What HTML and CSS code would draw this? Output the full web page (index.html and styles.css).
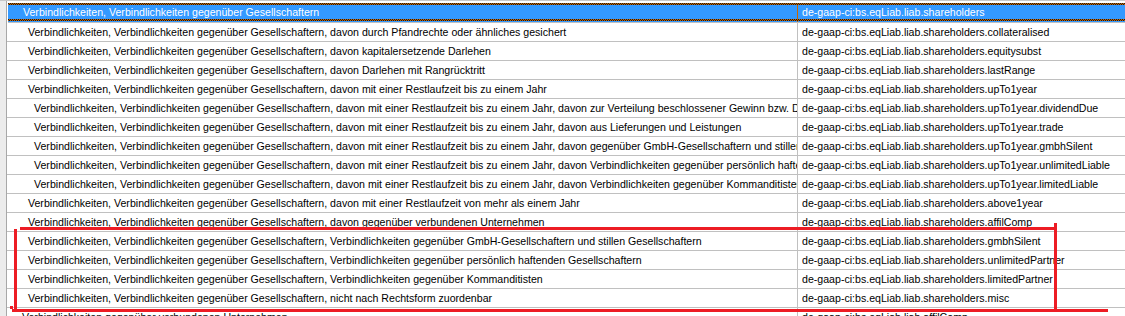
FILE: index.html
```html
<!DOCTYPE html>
<html lang="de">
<head>
<meta charset="utf-8">
<title>Taxonomie</title>
<link rel="stylesheet" href="styles.css">
</head>
<body>
<div class="frame">
  <div class="gutter"></div>
  <div class="grid">
    <div class="row selected"><div class="c1 l0">Verbindlichkeiten, Verbindlichkeiten gegenüber Gesellschaftern</div><div class="c2">de-gaap-ci:bs.eqLiab.liab.shareholders</div></div>
    <div class="row"><div class="c1 l1">Verbindlichkeiten, Verbindlichkeiten gegenüber Gesellschaftern, davon durch Pfandrechte oder ähnliches gesichert</div><div class="c2">de-gaap-ci:bs.eqLiab.liab.shareholders.collateralised</div></div>
    <div class="row"><div class="c1 l1">Verbindlichkeiten, Verbindlichkeiten gegenüber Gesellschaftern, davon kapitalersetzende Darlehen</div><div class="c2">de-gaap-ci:bs.eqLiab.liab.shareholders.equitysubst</div></div>
    <div class="row"><div class="c1 l1">Verbindlichkeiten, Verbindlichkeiten gegenüber Gesellschaftern, davon Darlehen mit Rangrücktritt</div><div class="c2">de-gaap-ci:bs.eqLiab.liab.shareholders.lastRange</div></div>
    <div class="row"><div class="c1 l1">Verbindlichkeiten, Verbindlichkeiten gegenüber Gesellschaftern, davon mit einer Restlaufzeit bis zu einem Jahr</div><div class="c2">de-gaap-ci:bs.eqLiab.liab.shareholders.upTo1year</div></div>
    <div class="row"><div class="c1 l2">Verbindlichkeiten, Verbindlichkeiten gegenüber Gesellschaftern, davon mit einer Restlaufzeit bis zu einem Jahr, davon zur Verteilung beschlossener Gewinn bzw. Dividende</div><div class="c2">de-gaap-ci:bs.eqLiab.liab.shareholders.upTo1year.dividendDue</div></div>
    <div class="row"><div class="c1 l2">Verbindlichkeiten, Verbindlichkeiten gegenüber Gesellschaftern, davon mit einer Restlaufzeit bis zu einem Jahr, davon aus Lieferungen und Leistungen</div><div class="c2">de-gaap-ci:bs.eqLiab.liab.shareholders.upTo1year.trade</div></div>
    <div class="row"><div class="c1 l2">Verbindlichkeiten, Verbindlichkeiten gegenüber Gesellschaftern, davon mit einer Restlaufzeit bis zu einem Jahr, davon gegenüber GmbH-Gesellschaftern und stillen Gesellschaftern</div><div class="c2">de-gaap-ci:bs.eqLiab.liab.shareholders.upTo1year.gmbhSilent</div></div>
    <div class="row"><div class="c1 l2">Verbindlichkeiten, Verbindlichkeiten gegenüber Gesellschaftern, davon mit einer Restlaufzeit bis zu einem Jahr, davon Verbindlichkeiten gegenüber persönlich haftenden Gesellschaftern</div><div class="c2">de-gaap-ci:bs.eqLiab.liab.shareholders.upTo1year.unlimitedLiable</div></div>
    <div class="row"><div class="c1 l2">Verbindlichkeiten, Verbindlichkeiten gegenüber Gesellschaftern, davon mit einer Restlaufzeit bis zu einem Jahr, davon Verbindlichkeiten gegenüber Kommanditisten</div><div class="c2">de-gaap-ci:bs.eqLiab.liab.shareholders.upTo1year.limitedLiable</div></div>
    <div class="row"><div class="c1 l1">Verbindlichkeiten, Verbindlichkeiten gegenüber Gesellschaftern, davon mit einer Restlaufzeit von mehr als einem Jahr</div><div class="c2">de-gaap-ci:bs.eqLiab.liab.shareholders.above1year</div></div>
    <div class="row"><div class="c1 l1">Verbindlichkeiten, Verbindlichkeiten gegenüber Gesellschaftern, davon gegenüber verbundenen Unternehmen</div><div class="c2">de-gaap-ci:bs.eqLiab.liab.shareholders.affilComp</div></div>
    <div class="row"><div class="c1 l1">Verbindlichkeiten, Verbindlichkeiten gegenüber Gesellschaftern, Verbindlichkeiten gegenüber GmbH-Gesellschaftern und stillen Gesellschaftern</div><div class="c2">de-gaap-ci:bs.eqLiab.liab.shareholders.gmbhSilent</div></div>
    <div class="row"><div class="c1 l1">Verbindlichkeiten, Verbindlichkeiten gegenüber Gesellschaftern, Verbindlichkeiten gegenüber persönlich haftenden Gesellschaftern</div><div class="c2">de-gaap-ci:bs.eqLiab.liab.shareholders.unlimitedPartner</div></div>
    <div class="row"><div class="c1 l1">Verbindlichkeiten, Verbindlichkeiten gegenüber Gesellschaftern, Verbindlichkeiten gegenüber Kommanditisten</div><div class="c2">de-gaap-ci:bs.eqLiab.liab.shareholders.limitedPartner</div></div>
    <div class="row"><div class="c1 l1">Verbindlichkeiten, Verbindlichkeiten gegenüber Gesellschaftern, nicht nach Rechtsform zuordenbar</div><div class="c2">de-gaap-ci:bs.eqLiab.liab.shareholders.misc</div></div>
    <div class="row"><div class="c1 l0">Verbindlichkeiten gegenüber verbundenen Unternehmen</div><div class="c2">de-gaap-ci:bs.eqLiab.liab.affilComp</div></div>
  </div>
</div>
<div class="mark">
  <div class="mark-top"></div>
  <div class="mark-left"></div>
  <div class="mark-right"></div>
  <div class="mark-bottom"></div>
  <div class="mark-tick"></div>
</div>
</body>
</html>
```
FILE: styles.css
```css
html, body {
  margin: 0;
  padding: 0;
  background: #ffffff;
  overflow: hidden;
}
body {
  width: 1125px;
  height: 316px;
  position: relative;
  font-family: "Liberation Sans", Arial, sans-serif;
  font-size: 10.6px;
  color: #000000;
}
.frame {
  display: flex;
  height: 316px;
  border-top: 1px solid #c8c8c8;
  box-sizing: border-box;
}
.gutter {
  width: 6px;
  background: #ececec;
  border-right: 1px solid #a8a8a8;
  flex: none;
}
.grid {
  flex: 1;
  min-width: 0;
  padding-top: 2px;
  overflow: hidden;
}
.row {
  display: flex;
  height: 19px;
  box-sizing: border-box;
  border-bottom: 1px solid #c0c0c0;
  line-height: 18px;
  white-space: nowrap;
}
.c1 {
  box-sizing: border-box;
  width: 790px;
  flex: none;
  overflow: hidden;
}
.c2 {
  box-sizing: border-box;
  flex: 1;
  min-width: 0;
  border-left: 1px solid #c0c0c0;
  padding-left: 4px;
  overflow: hidden;
}
.l0 { padding-left: 15px; }
.l1 { padding-left: 21px; }
.l2 { padding-left: 27px; }
.selected {
  height: 20px;
  line-height: 19px;
  position: relative;
  background: #3399ff;
  color: #ffffff;
  margin-left: 1px;
}
.selected .c1 { width: 789px; }
.selected .c2 { border-left-color: #cc6600; }
.selected::before,
.selected::after {
  content: "";
  position: absolute;
  left: 0;
  right: 0;
  height: 2px;
  background: repeating-conic-gradient(#cc6600 0 25%, #1a1a1a 0 50%) 0 0 / 2px 2px;
}
.selected::before { top: 0; }
.selected::after { bottom: 1px; }
.mark div {
  position: absolute;
  background: #ed1c24;
}
.mark-top { left: 20px; top: 227px; width: 1036px; height: 3px; }
.mark-left { left: 14px; top: 229px; width: 3px; height: 83px; }
.mark-right { left: 1054px; top: 223px; width: 3px; height: 87px; }
.mark-bottom { left: 12px; top: 309px; width: 1096px; height: 3px; }
.mark-tick { left: 10px; top: 306px; width: 3px; height: 3px; }
```
